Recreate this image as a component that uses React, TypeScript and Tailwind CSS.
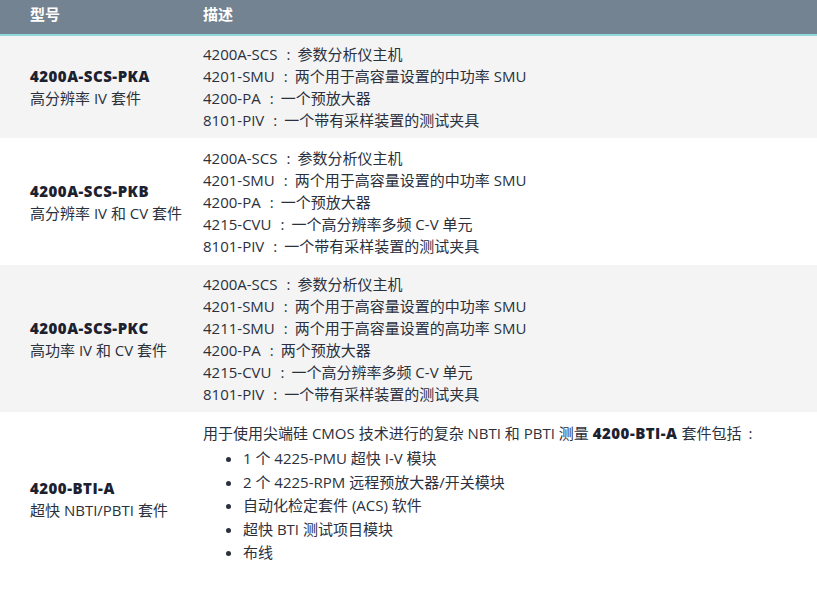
import React from "react";

const font = { fontFamily: '"Open Sans", "Noto Sans CJK SC", sans-serif' };

type Row = { code: string; name: string; lines: string[]; pad: string; bg: string };

const rows: Row[] = [
  {
    code: "4200A-SCS-PKA",
    name: "高分辨率 IV 套件",
    lines: [
      "4200A-SCS：参数分析仪主机",
      "4201-SMU：两个用于高容量设置的中功率 SMU",
      "4200-PA：一个预放大器",
      "8101-PIV：一个带有采样装置的测试夹具",
    ],
    pad: "pt-[7px] pb-[7px]",
    bg: "bg-[#f4f4f4]",
  },
  {
    code: "4200A-SCS-PKB",
    name: "高分辨率 IV 和 CV 套件",
    lines: [
      "4200A-SCS：参数分析仪主机",
      "4201-SMU：两个用于高容量设置的中功率 SMU",
      "4200-PA：一个预放大器",
      "4215-CVU：一个高分辨率多频 C-V 单元",
      "8101-PIV：一个带有采样装置的测试夹具",
    ],
    pad: "pt-[9px] pb-[8px]",
    bg: "bg-white",
  },
  {
    code: "4200A-SCS-PKC",
    name: "高功率 IV 和 CV 套件",
    lines: [
      "4200A-SCS：参数分析仪主机",
      "4201-SMU：两个用于高容量设置的中功率 SMU",
      "4211-SMU：两个用于高容量设置的高功率 SMU",
      "4200-PA：两个预放大器",
      "4215-CVU：一个高分辨率多频 C-V 单元",
      "8101-PIV：一个带有采样装置的测试夹具",
    ],
    pad: "pt-[8px] pb-[7px]",
    bg: "bg-[#f4f4f4]",
  },
];

function Line({ text }: { text: string }) {
  const i = text.indexOf("：");
  return (
    <div className="whitespace-nowrap">
      {text.slice(0, i)}
      <span className="inline-block w-[20px] pl-[9px]">:</span>
      {text.slice(i + 1)}
    </div>
  );
}

export default function App() {
  return (
    <div className="w-[817px] h-[594px] bg-white text-[15px] leading-[22px] text-[#2b303d]" style={font}>
      <div className="grid grid-cols-[203px_1fr] h-[36px] bg-[#738391] border-b-2 border-[#8fd9df] text-white font-bold pt-[3px]">
        <div className="pl-[30px]">型号</div>
        <div>描述</div>
      </div>
      {rows.map((r) => (
        <div key={r.code} className={`grid grid-cols-[203px_1fr] items-center ${r.pad} ${r.bg}`}>
          <div className="pl-[30px]">
            <div className="font-extrabold tracking-[0.5px] text-[#1c2130]">{r.code}</div>
            <div>{r.name}</div>
          </div>
          <div>
            {r.lines.map((l, k) => (
              <Line key={k} text={l} />
            ))}
          </div>
        </div>
      ))}
      <div className="grid grid-cols-[203px_1fr] items-center pt-[10px] pb-[21px] bg-white">
        <div className="pl-[30px] mt-[11px]">
          <div className="font-extrabold tracking-[0.5px] text-[#1c2130]">4200-BTI-A</div>
          <div>超快 NBTI/PBTI 套件</div>
        </div>
        <div>
          <div className="mb-[3px] whitespace-nowrap">
            用于使用尖端硅 CMOS 技术进行的复杂 NBTI 和 PBTI 测量 <span className="font-extrabold tracking-[0.5px] text-[#1c2130]">4200-BTI-A</span> 套件包括<span className="inline-block w-[20px] pl-[7px]">:</span>
          </div>
          <ul className="list-disc pl-[40px] leading-[23.5px]">
            <li>1 个 4225-PMU 超快 I-V 模块</li>
            <li>2 个 4225-RPM 远程预放大器/开关模块</li>
            <li>自动化检定套件 (ACS) 软件</li>
            <li>超快 BTI 测试项目模块</li>
            <li>布线</li>
          </ul>
        </div>
      </div>
    </div>
  );
}
